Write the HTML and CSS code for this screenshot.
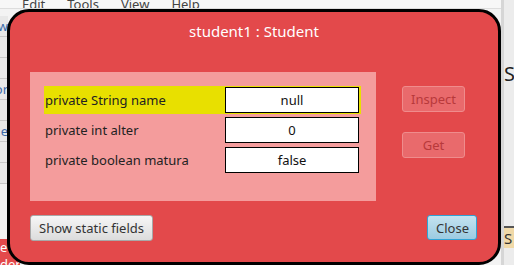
FILE: index.html
```html
<!DOCTYPE html>
<html lang="en">
<head>
  <meta charset="UTF-8">
  <title>student1 : Student</title>
  <link rel="stylesheet" href="styles.css">
</head>
<body>
  <div class="desktop">
    <div class="menubar">
      <span>Edit</span>
      <span>Tools</span>
      <span>View</span>
      <span>Help</span>
    </div>
    <div class="side-left">
      <div class="cell">w</div>
      <div class="cell"></div>
      <div class="cell"></div>
      <div class="cell">or</div>
      <div class="cell"></div>
      <div class="cell">e</div>
      <div class="cell"></div>
      <div class="cell"></div>
    </div>
    <div class="side-bottom">
      <span>e</span>
      <span>der</span>
    </div>
    <div class="side-right">
      <div class="glyph">S</div>
      <div class="tan">S</div>
    </div>

    <div class="dialog">
      <div class="title">student1 : Student</div>

      <div class="content">
        <div class="fields">
          <div class="field selected">
            <span class="label">private String name</span>
            <span class="value">null</span>
          </div>
          <div class="field">
            <span class="label">private int alter</span>
            <span class="value">0</span>
          </div>
          <div class="field">
            <span class="label">private boolean matura</span>
            <span class="value">false</span>
          </div>
        </div>

        <div class="actions">
          <button class="btn disabled">Inspect</button>
          <button class="btn disabled">Get</button>
        </div>
      </div>

      <div class="footer">
        <button class="btn plain">Show static fields</button>
        <button class="btn close">Close</button>
      </div>
    </div>
  </div>
</body>
</html>
```

FILE: styles.css
```css
* {
  box-sizing: border-box;
}

body {
  margin: 0;
  font-family: "Noto Sans", "Open Sans", sans-serif;
  background-color: #f3f3f3;
  overflow: hidden;
}

.desktop {
  position: relative;
  width: 514px;
  height: 265px;
}

.menubar {
  height: 9px;
  overflow: hidden;
  display: flex;
  gap: 22px;
  padding-left: 22px;
  font-size: 13px;
  line-height: 8px;
  color: #444;
  background-color: #f7f7f7;
  border-bottom: 1px solid #ddd;
}

.side-left {
  position: absolute;
  left: 0;
  top: 16px;
  width: 8px;
  background-color: #e8e8e8;
}

.cell {
  height: 21px;
  border-bottom: 1px solid #c8c8c8;
  font-size: 13px;
  color: #3b6aa8;
  line-height: 20px;
  direction: rtl;
  overflow: hidden;
}

.side-bottom {
  position: absolute;
  left: 0;
  top: 239px;
  width: 20px;
  height: 26px;
  overflow: hidden;
  background-color: #e3494b;
  color: #fff;
  font-size: 13px;
  line-height: 17px;
  display: flex;
  flex-direction: column;
}

.side-right {
  position: absolute;
  left: 501px;
  top: 0;
  width: 13px;
  height: 265px;
  background-color: #ececec;
  border-left: 3px solid #d6d6d6;
}

.glyph {
  margin-top: 62px;
  font-size: 20px;
  line-height: 24px;
  color: #222;
}

.tan {
  margin-top: 140px;
  height: 22px;
  background-color: #f0d9a8;
  border-top: 2px solid #555;
  font-size: 15px;
  line-height: 20px;
  color: #333;
}

.dialog {
  position: absolute;
  left: 7px;
  top: 9px;
  width: 494px;
  height: 256px;
  background-color: #e3494b;
  border: 3px solid #000;
  border-radius: 22px;
  display: flex;
  flex-direction: column;
  padding: 0 20px 0 20px;
}

.title {
  margin-top: 9px;
  height: 20px;
  line-height: 20px;
  font-size: 15px;
  text-align: center;
  color: #fff;
}

.content {
  margin-top: 31px;
  display: flex;
  gap: 26px;
}

.fields {
  width: 346px;
  height: 129px;
  background-color: #f49c9c;
  padding: 14px 15px 0 14px;
  display: flex;
  flex-direction: column;
  gap: 2px;
}

.field {
  display: flex;
  align-items: center;
  height: 28px;
  padding: 1px 2px 1px 1px;
}

.field.selected {
  background-color: #e8e000;
}

.label {
  width: 180px;
  font-size: 13px;
  color: #222;
}

.value {
  width: 134px;
  height: 26px;
  border: 1px solid #000;
  background-color: #fff;
  font-size: 13px;
  line-height: 24px;
  text-align: center;
  color: #111;
}

.actions {
  padding-top: 14px;
  display: flex;
  flex-direction: column;
  gap: 20px;
}

.btn {
  font-family: inherit;
  font-size: 13px;
  height: 26px;
  border-radius: 3px;
  padding: 0 8px;
}

.btn.disabled {
  width: 63px;
  background-color: #e96a6c;
  border: 1px solid #ef8c8c;
  color: #b8393b;
}

.footer {
  margin-top: 14px;
  display: flex;
  justify-content: space-between;
  padding-right: 1px;
}

.btn.plain {
  width: 123px;
  background: linear-gradient(#f6f6f6, #dcdcdc);
  border: 1px solid #a8a8a8;
  color: #333;
}

.btn.close {
  width: 50px;
  height: 25px;
  background: linear-gradient(#c4e3f0, #9ccbe1);
  border: 1px solid #2fa3d6;
  color: #333;
}
```
